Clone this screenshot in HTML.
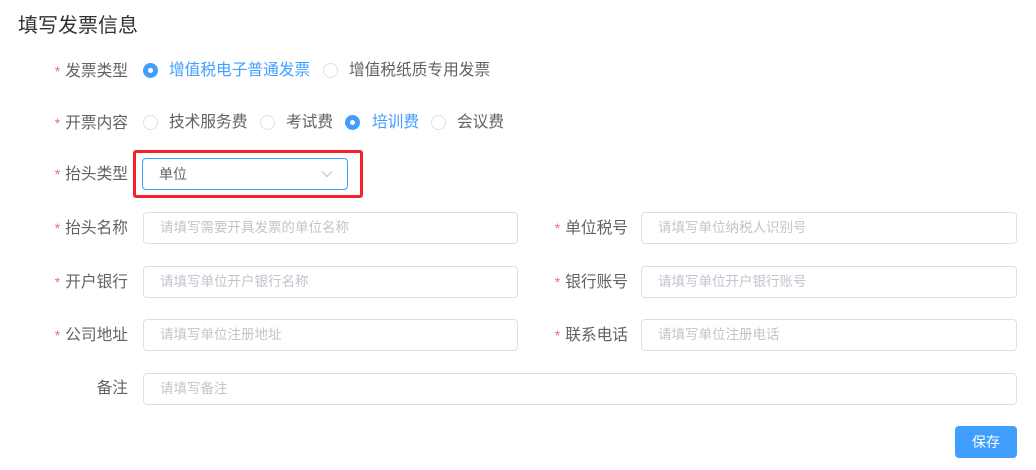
<!DOCTYPE html>
<html><head><meta charset="utf-8"><style>
*{box-sizing:border-box;margin:0;padding:0}
body{width:1036px;height:470px;background:#fff;font-family:"Liberation Sans","Noto Sans CJK SC",sans-serif;position:relative;overflow:hidden;color:#606266}
.a{position:absolute;white-space:nowrap}
.t{left:18px;top:9px;font-size:20px;color:#303133}
.lb{font-size:15.7px;color:#606266;text-align:right;width:120px;height:20px;line-height:20px}
.lb b{color:#f56c6c;font-weight:normal;margin-right:5px;font-size:14px}
.r{width:15px;height:15px;border:1px solid #dcdfe6;border-radius:50%;background:#fff}
.r.on{background:#409eff;border-color:#409eff}
.r.on:after{content:"";position:absolute;left:4px;top:4px;width:5px;height:5px;border-radius:50%;background:#fff}
.rt{font-size:15.7px;line-height:20px;color:#606266}
.rt.on{color:#409eff}
.in{border:1px solid #dcdfe6;border-radius:4px;height:32px;line-height:30px;padding-left:16px;font-size:13.5px;color:#c0c4cc}
</style></head><body>
<div class="a t">填写发票信息</div>

<div class="a lb" style="left:8px;top:61px"><b>*</b>发票类型</div>
<div class="a r on" style="left:143px;top:63px"></div>
<div class="a rt on" style="left:169px;top:61px">增值税电子普通发票</div>
<div class="a r" style="left:323px;top:63px"></div>
<div class="a rt" style="left:349px;top:61px">增值税纸质专用发票</div>

<div class="a lb" style="left:8px;top:113px"><b>*</b>开票内容</div>
<div class="a r" style="left:143px;top:115px"></div>
<div class="a rt" style="left:169px;top:113px">技术服务费</div>
<div class="a r" style="left:260px;top:115px"></div>
<div class="a rt" style="left:286px;top:113px">考试费</div>
<div class="a r on" style="left:345px;top:115px"></div>
<div class="a rt on" style="left:372px;top:113px">培训费</div>
<div class="a r" style="left:431px;top:115px"></div>
<div class="a rt" style="left:457px;top:113px">会议费</div>

<div class="a lb" style="left:8px;top:164px"><b>*</b>抬头类型</div>
<div class="a" style="left:133px;top:150px;width:230px;height:48px;border:3px solid #f5222d;border-radius:3px"></div>
<div class="a in" style="left:142px;top:158px;width:206px;border-color:#409eff;color:#606266;font-size:14px">单位
<svg style="position:absolute;right:14px;top:11px" width="12" height="8" viewBox="0 0 12 8"><path d="M1 1.5L6 6.5L11 1.5" fill="none" stroke="#c0c4cc" stroke-width="1.2"/></svg></div>

<div class="a lb" style="left:8px;top:218px"><b>*</b>抬头名称</div>
<div class="a in" style="left:143px;top:212px;width:375px">请填写需要开具发票的单位名称</div>
<div class="a lb" style="left:508px;top:218px"><b>*</b>单位税号</div>
<div class="a in" style="left:641px;top:212px;width:376px">请填写单位纳税人识别号</div>

<div class="a lb" style="left:8px;top:272px"><b>*</b>开户银行</div>
<div class="a in" style="left:143px;top:266px;width:375px">请填写单位开户银行名称</div>
<div class="a lb" style="left:508px;top:272px"><b>*</b>银行账号</div>
<div class="a in" style="left:641px;top:266px;width:376px">请填写单位开户银行账号</div>

<div class="a lb" style="left:8px;top:325px"><b>*</b>公司地址</div>
<div class="a in" style="left:143px;top:319px;width:375px">请填写单位注册地址</div>
<div class="a lb" style="left:508px;top:325px"><b>*</b>联系电话</div>
<div class="a in" style="left:641px;top:319px;width:376px">请填写单位注册电话</div>

<div class="a lb" style="left:8px;top:379px">备注</div>
<div class="a in" style="left:143px;top:373px;width:874px">请填写备注</div>

<div class="a" style="left:955px;top:426px;width:62px;height:32px;background:#409eff;border-radius:4px;color:#fff;font-size:14px;line-height:32px;text-align:center">保存</div>
</body></html>
